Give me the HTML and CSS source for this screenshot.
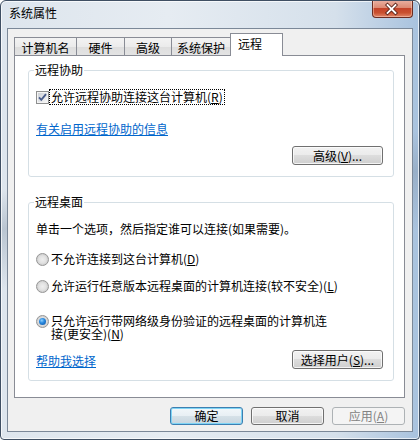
FILE: index.html
```html
<!DOCTYPE html>
<html lang="zh-CN">
<head>
<meta charset="utf-8">
<title>系统属性</title>
<link rel="stylesheet" href="styles.css">
</head>
<body>
<div class="window">
  <div class="titlebar">
    <span class="title">系统属性</span>
    <div class="close">
      <svg width="41" height="18" viewBox="0 0 41 18">
        <path d="M16.5 5 L24.5 13 M24.5 5 L16.5 13" stroke="#5a241a" stroke-width="3.6" stroke-linecap="square" fill="none"/>
        <path d="M16.5 5 L24.5 13 M24.5 5 L16.5 13" stroke="#ffffff" stroke-width="1.8" stroke-linecap="square" fill="none"/>
      </svg>
    </div>
  </div>
  <div class="client">
    <div class="tabs">
      <div class="tab t1">计算机名</div>
      <div class="tab t2">硬件</div>
      <div class="tab t3">高级</div>
      <div class="tab t4">系统保护</div>
      <div class="tab active">远程</div>
    </div>
    <div class="panel">
      <fieldset class="group g1">
        <legend>远程协助</legend>
        <div class="check-row">
          <svg class="checkbox" width="13" height="13" viewBox="0 0 13 13">
            <defs>
              <linearGradient id="cbg" x1="0" y1="0" x2="1" y2="1">
                <stop offset="0" stop-color="#cdd1d7"/>
                <stop offset="1" stop-color="#f7f7f7"/>
              </linearGradient>
            </defs>
            <rect x="0.5" y="0.5" width="12" height="12" fill="#f4f4f4" stroke="#8e8f8f"/>
            <rect x="2" y="2" width="9" height="9" fill="url(#cbg)"/>
            <path d="M3 6.3 L5.3 8.8 L10 3.2" stroke="#4a5d8c" stroke-width="1.9" fill="none"/>
          </svg>
          <span class="focus">允许远程协助连接这台计算机(<u>R</u>)</span>
        </div>
        <a class="link link1" href="#">有关启用远程协助的信息</a>
        <div class="btn-row">
          <button class="btn gbtn">高级(<u>V</u>)...</button>
        </div>
      </fieldset>
      <fieldset class="group g2">
        <legend>远程桌面</legend>
        <p class="desc">单击一个选项，然后指定谁可以连接(如果需要)。</p>
        <div class="radio r1">
          <span class="rb"></span>
          <span class="rtext">不允许连接到这台计算机(<u>D</u>)</span>
        </div>
        <div class="radio r2">
          <span class="rb"></span>
          <span class="rtext">允许运行任意版本远程桌面的计算机连接(较不安全)(<u>L</u>)</span>
        </div>
        <div class="radio r3">
          <span class="rb on"></span>
          <span class="rtext wrap"><span>只允许运行带网络级身份验证的远程桌面的计算机连</span><span>接(更安全)(<u>N</u>)</span></span>
        </div>
        <div class="foot-row">
          <a class="link" href="#">帮助我选择</a>
          <button class="btn gbtn">选择用户(<u>S</u>)...</button>
        </div>
      </fieldset>
    </div>
    <div class="buttons">
      <button class="btn dbtn default">确定</button>
      <button class="btn dbtn">取消</button>
      <button class="btn dbtn disabled">应用(<u>A</u>)</button>
    </div>
  </div>
</div>
</body>
</html>
```

FILE: styles.css
```css
html, body {
  margin: 0;
  padding: 0;
  background: #ffffff;
}

body {
  font-family: "Noto Sans CJK SC", "Noto Sans", sans-serif;
  font-size: 12px;
  color: #000;
}

.window {
  width: 420px;
  height: 440px;
  box-sizing: border-box;
  border: 1px solid #3f4f63;
  border-radius: 6px 6px 4px 4px;
  padding: 0 6px 7px 6px;
  display: flex;
  flex-direction: column;
  background:
    linear-gradient(172deg, rgba(255,255,255,0) 0%, rgba(255,255,255,0) 38%, rgba(120,138,158,0.35) 46%, rgba(255,255,255,0) 58%),
    linear-gradient(90deg, #dde5ed 0%, #e6ecf2 40%, #d5e0eb 80%, #a8c2de 100%);
  box-shadow: inset 0 0 0 1px rgba(255,255,255,0.7);
  overflow: hidden;
}

.titlebar {
  height: 27px;
  display: flex;
  justify-content: space-between;
  align-items: flex-start;
  flex-shrink: 0;
}

.title {
  padding: 5px 0 0 2px;
  line-height: 14px;
  color: #000;
}

.close {
  width: 41px;
  height: 18px;
  margin-top: -1px;
  box-sizing: border-box;
  border: 1px solid #6b2c22;
  border-top: 0;
  border-radius: 0 0 4px 4px;
  background: linear-gradient(180deg, #eab2a4 0%, #dc8a74 45%, #c4432a 50%, #c9502f 75%, #e0866a 100%);
  box-shadow: inset 0 0 0 1px rgba(255,220,200,0.45);
  display: flex;
  align-items: center;
  justify-content: center;
}

.close svg {
  display: block;
  margin-left: -2px;
}

.client {
  flex: 1;
  background: #f0f0f0;
  border: 1px solid #7b8898;
  padding: 4px 7px 6px 6px;
  display: flex;
  flex-direction: column;
}

/* tabs */
.tabs {
  display: flex;
  align-items: flex-end;
  height: 23px;
  margin-bottom: -1px;
}

.tab {
  height: 19px;
  box-sizing: border-box;
  border: 1px solid #898c95;
  border-bottom: 0;
  background: linear-gradient(180deg, #f3f3f3 0%, #ebebeb 50%, #dedede 50%, #e4e4e4 100%);
  text-align: center;
  line-height: 14px;
  padding-top: 3px;
  margin-left: -1px;
  white-space: nowrap;
}

.t1 { width: 63px; margin-left: 0; }
.t2 { width: 49px; }
.t3 { width: 48px; }
.t4 { width: 60px; }

.tab.active {
  width: 53px;
  height: 23px;
  background: #ffffff;
  position: relative;
  z-index: 1;
  padding-top: 3px;
  text-align: left;
  padding-left: 7px;
}

.panel {
  height: 343px;
  box-sizing: border-box;
  background: #ffffff;
  border: 1px solid #898c95;
  padding: 7px 10px 0 13px;
}

/* group boxes */
.group {
  margin: 0;
  min-width: 0;
  border: 1px solid #d5dfe5;
  border-radius: 3px;
  padding: 0 10px 11px 7px;
}

.group legend {
  padding: 0 1px;
  margin-left: -2px;
  line-height: 14px;
  color: #000;
}

.g2 {
  margin-top: 18px;
}

.check-row {
  display: flex;
  align-items: center;
  margin-top: 12px;
  height: 16px;
}

.checkbox {
  display: block;
  flex-shrink: 0;
}

.focus {
  margin-left: 0px;
  border: 1px dotted #000;
  padding: 0 1px;
  line-height: 14px;
  white-space: nowrap;
}

.link {
  display: block;
  color: #0066cc;
  text-decoration: underline;
  line-height: 14px;
  width: max-content;
}

.link1 {
  margin-top: 17px;
}

.btn-row {
  display: flex;
  justify-content: flex-end;
  margin-top: 10px;
}

.btn {
  font-family: "Noto Sans CJK SC", "Noto Sans", sans-serif;
  font-size: 12px;
  color: #000;
  box-sizing: border-box;
  border: 1px solid #707070;
  border-radius: 3px;
  background: linear-gradient(180deg, #f2f2f2 0%, #ebebeb 50%, #dddddd 50%, #cfcfcf 100%);
  box-shadow: inset 0 0 0 1px rgba(252,252,252,0.8);
  padding: 0;
  line-height: 14px;
  white-space: nowrap;
}

.gbtn {
  width: 91px;
  height: 19px;
}

.desc {
  margin: 13px 0 0 0;
  line-height: 14px;
  white-space: nowrap;
}

.radio {
  display: flex;
  align-items: flex-start;
}

.r1 { margin-top: 16px; }
.r2 { margin-top: 13px; }
.r3 { margin-top: 21px; }

.rb {
  width: 13px;
  height: 13px;
  box-sizing: border-box;
  border-radius: 50%;
  border: 1px solid #959595;
  background: radial-gradient(circle at 50% 50%, #eeeeee 0%, #e2e2e2 45%, #d0d0d0 70%, #f4f4f4 100%);
  margin-top: 1px;
  flex-shrink: 0;
  display: flex;
  align-items: center;
  justify-content: center;
}

.rb.on::after {
  content: "";
  width: 7px;
  height: 7px;
  border-radius: 50%;
  background: radial-gradient(circle at 40% 35%, #8fd1ff 0%, #2a8ae0 40%, #0c4f9e 100%);
}

.rtext {
  margin-left: 2px;
  line-height: 14px;
  white-space: nowrap;
}

.rtext.wrap {
  white-space: normal;
  width: 280px;
  line-height: 13px;
  margin-top: 0;
}

.foot-row {
  display: flex;
  justify-content: space-between;
  align-items: center;
  margin-top: 10px;
}

.foot-row .link {
  margin-top: 3px;
}

.buttons {
  display: flex;
  justify-content: flex-end;
  gap: 8px;
  margin-top: 9px;
}

.dbtn {
  width: 73px;
  height: 18px;
}

.dbtn.default {
  border-color: #3c7fb1;
  box-shadow: inset 0 0 0 1px #7fd4f5;
  background: linear-gradient(180deg, #f2f7fa 0%, #e8eff4 50%, #d6e1e8 50%, #c8d6df 100%);
}

.dbtn.disabled {
  border-color: #adb2b5;
  background: #f4f4f4;
  box-shadow: none;
  color: #838383;
}
```
